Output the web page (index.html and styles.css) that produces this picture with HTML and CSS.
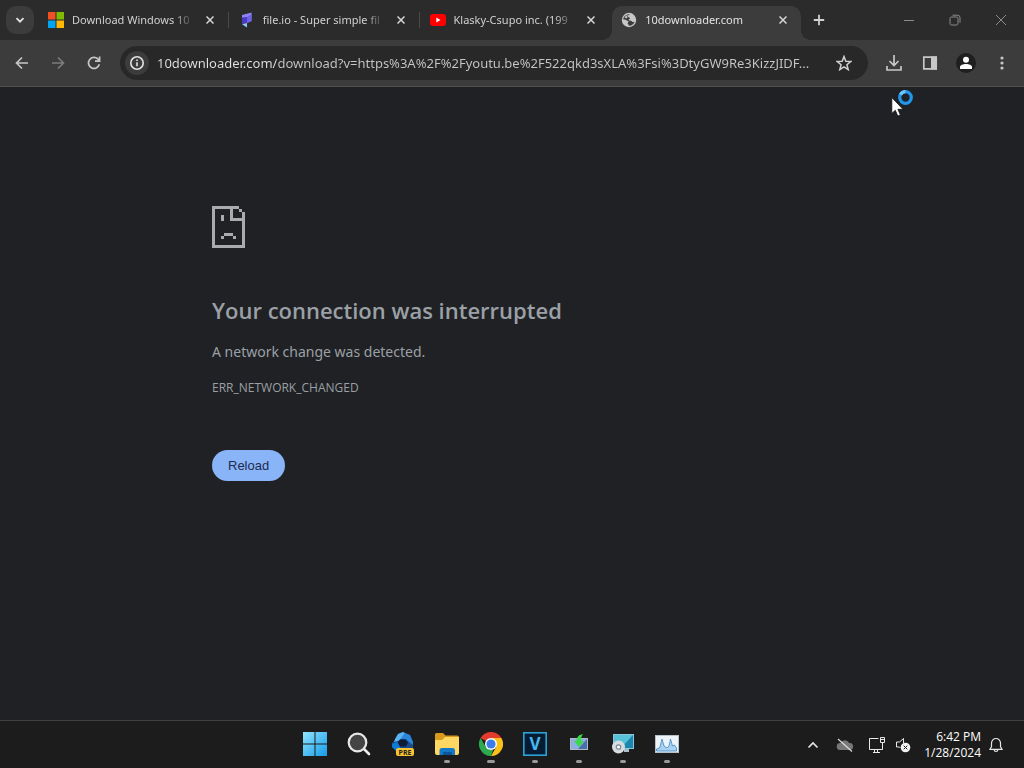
FILE: index.html
```html
<!DOCTYPE html>
<html lang="en">
<head>
    <meta charset="UTF-8">
    <meta name="viewport" content="width=device-width, initial-scale=1.0">
    <title>10downloader.com</title>
    <link rel="stylesheet" href="styles.css">
</head>
<body>
    <!-- tab strip -->
    <header class="tabstrip">
        <button class="tabSearch" aria-label="Search tabs">
            <svg width="10" height="10" viewBox="0 0 10 10"><path d="M1.5 3.2 5 6.700l3.500-3.500" fill="none" stroke="#e3e3e3" stroke-width="1.8"/></svg>
        </button>
        <nav class="tabs">
            <div class="tab">
                <svg class="favicon" viewBox="0 0 16 16">
                    <path fill="#f25022" d="M0 0h7.500v7.500H0z"/><path fill="#7fba00" d="M8.500 0H16v7.500H8.500z"/>
                    <path fill="#00a4ef" d="M0 8.500h7.500V16H0z"/><path fill="#ffb900" d="M8.500 8.500H16V16H8.500z"/>
                </svg>
                <a href="#" class="tab__title">Download Windows 10</a>
                <button class="tab__close" aria-label="Close tab"><svg width="8" height="8" viewBox="0 0 8 8"><path d="m.5.5 7 7m0-7-7 7"/></svg></button>
            </div>
            <div class="tab">
                <svg class="favicon" viewBox="0 0 16 16">
                    <path fill="#8f82f5" d="M3 3 12.500.5V9L8 11V6L3 7z"/>
                    <path fill="#4a3bc0" d="M3 5.500 8 5v6l-5 1z"/>
                    <path fill="#6f62ea" d="m8 5 4.500-3v7L8 11z"/>
                    <path fill="#8fc8f7" d="m3 12.300 5-1.300v4.500z"/>
                </svg>
                <a href="#" class="tab__title">file.io - Super simple fil</a>
                <button class="tab__close" aria-label="Close tab"><svg width="8" height="8" viewBox="0 0 8 8"><path d="m.5.5 7 7m0-7-7 7"/></svg></button>
            </div>
            <div class="tab">
                <svg class="favicon" viewBox="0 0 16 16">
                    <rect y="2" width="16" height="12" rx="3" fill="#f00"/><path fill="#fff" d="m6.300 5.500 4.200 2.500-4.200 2.500z"/>
                </svg>
                <a href="#" class="tab__title">Klasky-Csupo inc. (199</a>
                <button class="tab__close" aria-label="Close tab"><svg width="8" height="8" viewBox="0 0 8 8"><path d="m.5.5 7 7m0-7-7 7"/></svg></button>
            </div>
            <div class="tab tab--active">
                <svg class="favicon" viewBox="0 0 16 16">
                    <circle cx="8" cy="8" r="7.200" fill="#c7c7c7"/>
                    <path fill="#3c3c3c" d="M9 2.300C7.500 3 6.500 4 7.200 5c.6.700 1.700.300 1.800 1.200 0 .8-1.200.7-1.300 1.600-.1.800 1 .9 2 .9 1.300.1 1.400 1.300 2.500 1.400.6 0 1.200-.3 1.500-.7-.7 2.700-3.300 4.500-6.200 4.200.1-1.100-.2-1.500-1-2 .1-1 1.100-1.100 1-2-.2-1.100-1.700-.8-2.500-1.600-.7-.7-1.700-.6-2.700-.6C2.600 4.500 5.300 2 9 2.300z"/>
                    <path fill="#c7c7c7" d="M3.500 5.500c1-1.500 2.300-2.300 4-2.500C6 4 6 5 6.500 5.800 5.500 6.700 4.500 6 3.500 5.500z"/>
                </svg>
                <a href="#" class="tab__title">10downloader.com</a>
                <button class="tab__close" aria-label="Close tab"><svg width="8" height="8" viewBox="0 0 8 8"><path d="m.5.5 7 7m0-7-7 7"/></svg></button>
            </div>
        </nav>
        <button class="newTab" aria-label="New tab">
            <svg width="12" height="12" viewBox="0 0 12 12"><path d="M6 .8v10.400M.8 6h10.400" stroke="#d0d0d0" stroke-width="1.800"/></svg>
        </button>
        <div class="winControls">
            <button aria-label="Minimize"><svg width="12" height="12" viewBox="0 0 12 12"><path d="M1 6.500h10"/></svg></button>
            <button aria-label="Restore"><svg width="12" height="12" viewBox="0 0 12 12"><rect x="1" y="3" width="8" height="8" rx="1.500"/><path d="M3.500 1.200h5a2.500 2.500 0 0 1 2.500 2.500v5"/></svg></button>
            <button aria-label="Close"><svg width="12" height="12" viewBox="0 0 12 12"><path d="m1 1 10 10M11 1 1 11"/></svg></button>
        </div>
    </header>

    <!-- toolbar -->
    <section class="toolbar">
        <button class="tool" aria-label="Back"><svg width="16" height="16" viewBox="0 0 16 16"><path d="M14 8H3M8 2.500 2.500 8 8 13.500"/></svg></button>
        <button class="tool" aria-label="Forward" disabled><svg width="16" height="16" viewBox="0 0 16 16"><path d="M2 8h11M8 2.500 13.500 8 8 13.500"/></svg></button>
        <button class="tool" aria-label="Reload page"><svg width="16" height="16" viewBox="0 0 16 16"><path d="M13.300 9.300A5.500 5.500 0 1 1 12 4.200l1.300 1.300M13.600 1.500v4.700H9"/></svg></button>
        <form class="omnibox">
            <button type="button" class="siteInfo" aria-label="Site information">
                <svg width="16" height="16" viewBox="0 0 16 16" fill="none" stroke="#e3e3e3" stroke-width="1.600"><circle cx="8" cy="8" r="6.200"/><path d="M8 7.200v4M8 4.500v1.600"/></svg>
            </button>
            <input type="text" class="url" aria-label="Address" value="10downloader.com/download?v=https%3A%2F%2Fyoutu.be%2F522qkd3sXLA%3Fsi%3DtyGW9Re3KizzJIDF...">
            <button type="button" class="star" aria-label="Bookmark this page">
                <svg width="16" height="16" viewBox="0 0 16 16"><path d="m8 1.500 1.800 4.700 5 .3-3.900 3.200 1.300 4.900L8 11.900l-4.200 2.700 1.300-4.900-3.900-3.200 5-.3z" fill="none" stroke="#d0d0d0" stroke-width="1.500"/></svg>
            </button>
        </form>
        <button class="tool tool--downloads" aria-label="Downloads"><svg width="18" height="18" viewBox="0 0 18 18"><path d="M9 1v10M4.500 7 9 11.500 13.500 7M2 12v4h14v-4"/></svg></button>
        <button class="tool" aria-label="Side panel"><svg width="16" height="16" viewBox="0 0 16 16"><path fill="#c7c7c7" stroke="none" d="M9 1.500h6v13H9z"/><path d="M1.800 2.200h12.400v11.600H1.800z"/></svg></button>
        <button class="tool" aria-label="Profile"><svg width="20" height="20" viewBox="0 0 20 20"><g stroke="none"><circle cx="10" cy="10" r="10" fill="#1f1f1f"/><circle cx="10" cy="6.800" r="3" fill="#fff"/><path fill="#fff" d="M4 16v-2c0-2 3-3 6-3s6 1 6 3v2z"/></g></svg></button>
        <button class="tool" aria-label="Menu"><svg width="16" height="16" viewBox="0 0 16 16"><g stroke="none" fill="#c7c7c7"><circle cx="8" cy="3" r="1.600"/><circle cx="8" cy="8" r="1.600"/><circle cx="8" cy="13" r="1.600"/></g></svg></button>
    </section>

    <!-- error page -->
    <main class="page">
        <section class="error">
            <svg class="error__icon" width="33" height="42" viewBox="0 0 11 14" shape-rendering="crispEdges" fill="#a9abae">
                <path d="M0 0h9v1H7v3h3v1H6V1H1v12h9V5h1v9H0zM9 1h1v1H9zM10 2h1v3h-1z"/>
                <path d="M3 3h1v2H3zM4 9h3v1H4zM3 10h1v1H3zM7 10h1v1H7z"/>
            </svg>
            <h1 class="error__title">Your connection was interrupted</h1>
            <p class="error__text">A network change was detected.</p>
            <p class="error__code">ERR_NETWORK_CHANGED</p>
            <button class="reload">Reload</button>
        </section>
    </main>

    <!-- taskbar -->
    <footer class="taskbar">
        <nav class="apps">
            <button class="app" aria-label="Start">
                <svg width="24" height="24" viewBox="0 0 24 24">
                    <defs><linearGradient id="win" x1="0" y1="0" x2="24" y2="24" gradientUnits="userSpaceOnUse"><stop offset="0" stop-color="#8fe4ff"/><stop offset="1" stop-color="#169be8"/></linearGradient></defs>
                    <path fill="url(#win)" d="M0 0h11.500v11.500H0zM12.500 0H24v11.500H12.500zM0 12.500h11.500V24H0zM12.500 12.500H24V24H12.500z"/>
                </svg>
            </button>
            <button class="app" aria-label="Search">
                <svg width="24" height="24" viewBox="0 0 24 24"><path d="m17 17 5 5" stroke="#eee" stroke-width="2.600" stroke-linecap="round"/><circle cx="10.500" cy="10.500" r="8.800" fill="#444" stroke="#e8e8e8" stroke-width="2.200"/></svg>
            </button>
            <button class="app" aria-label="Copilot preview">
                <svg width="24" height="26" viewBox="0 0 24 26">
                    <path fill="#1a4a8e" d="M7 3 12 1l7 3 3 7v8H5l-4-3v-4l3-3z"/>
                    <path fill="#59b4f5" d="m7 3 5-2 2 1-4 6-3 2-4 1 1-3z"/>
                    <path fill="#2a86d8" d="m14 2 5 2 3 7v3l-4-3-3-3h-5z"/>
                    <path fill="#0f7ad6" d="m1 13 5-2 3 5 2 5H6l-5-5z"/>
                    <path fill="#0d1b35" d="M9 8.500h5l3 3-2 4H9l-2-4z"/>
                    <rect x="5" y="17" width="18" height="8" rx="2" fill="#f9c530"/>
                    <text x="14" y="24" class="pre">PRE</text>
                </svg>
            </button>
            <button class="app app--open" aria-label="File Explorer">
                <svg width="24" height="24" viewBox="0 0 24 24">
                    <path fill="#d99a1c" d="M0 2.500Q0 1 1.500 1H8l2.500 2.500H22Q24 3.500 24 5v8H0z"/>
                    <path fill="#ffd763" d="M0 8h7l3-3h14v16q0 2-2 2H2q-2 0-2-2z"/>
                    <path fill="#1679c8" d="M4.500 18.500Q4.500 16 7 16h10.500q2.500 0 2.500 2.500V23H4.500z"/><path fill="#0b559b" d="M8 20h9v3H8z"/>
                </svg>
            </button>
            <button class="app app--open app--current" aria-label="Google Chrome">
                <svg width="24" height="24" viewBox="0 0 24 24">
                    <path fill="#e33b2e" d="M12 12 1.600 6A12 12 0 0 1 22.400 6z"/>
                    <path fill="#fbc116" d="M12 12V6h10.400A12 12 0 0 1 12 24l5.200-9z"/>
                    <path fill="#2da94f" d="M1.600 6 6.800 15l5.200 3 2.200-.4L12 24A12 12 0 0 1 1.600 6z"/>
                    <circle cx="12" cy="12" r="6" fill="#fff"/><circle cx="12" cy="12" r="4.600" fill="#3a7de8"/>
                </svg>
            </button>
            <button class="app app--open" aria-label="Vegas">
                <svg width="24" height="24" viewBox="0 0 24 24">
                    <rect x=".8" y=".8" width="22.400" height="22.400" fill="#071c33" stroke="#2ba3d9" stroke-width="1.600"/>
                    <text x="12" y="18" class="vee">V</text>
                </svg>
            </button>
            <button class="app app--open" aria-label="Installer">
                <svg width="24" height="24" viewBox="0 0 24 24">
                    <rect x="3.500" y="6.500" width="17" height="11" fill="#496fac" stroke="#aeb7c2"/><path fill="#8cafe0" d="M4 7h16l-9 10H4z"/>
                    <path fill="#37d84a" d="M16 2C11 3 9.500 6 9.500 9H7l5 6 5-6h-3c0-3 .5-5 2-7z"/>
                </svg>
            </button>
            <button class="app app--open" aria-label="Disc tool">
                <svg width="24" height="24" viewBox="0 0 24 24">
                    <rect x="2.500" y="2.500" width="20" height="14" fill="#1d86ad" stroke="#8cc5da"/><path fill="#55c2da" d="M3 3h19L10 16H3z"/>
                    <path fill="#a9bfcb" d="M13 17h5v3h-5z"/>
                    <circle cx="7.500" cy="15" r="6.500" fill="#d7dce1"/><circle cx="7.500" cy="15" r="2.200" fill="#fff" stroke="#7c8d9c" stroke-width="1.300"/>
                </svg>
            </button>
            <button class="app app--open" aria-label="Resource monitor">
                <svg width="24" height="24" viewBox="0 0 24 24">
                    <rect x=".5" y="3.500" width="23" height="17" fill="#eef3f7" stroke="#b8c0c8"/>
                    <path fill="#a9d2f0" stroke="#3b87c4" stroke-width=".8" d="M1.500 19v-2l3-1 1-3 1.500-6 2 7 3 2 2-2 1.500-7 2 7 2-1 2 3v3z"/>
                </svg>
            </button>
        </nav>
        <div class="tray">
            <button class="tray__btn" aria-label="Show hidden icons"><svg width="12" height="12" viewBox="0 0 12 12"><path d="m1.500 8.500 4.500-4.500 4.500 4.500" stroke-width="1.600"/></svg></button>
            <button class="tray__btn tray__btn--cloud" aria-label="OneDrive"><svg width="18" height="16" viewBox="0 0 18 16"><path d="M4 13a3.500 3.500 0 0 1 .5-7 4.800 4.800 0 0 1 8.700 0A3.500 3.500 0 0 1 14 13z" fill="#777" stroke="none"/><path d="m2 2 14 12.500" stroke="#ddd" stroke-width="1.200"/></svg></button>
            <button class="tray__btn" aria-label="Network"><svg width="18" height="18" viewBox="0 0 18 18"><path d="M10.500 2.500H1.500v11h13V9M5 16.500h7M6.500 13.500v3M9.500 13.500v3M12.500 1.500h4v5h-4zM12.500 3.500h4M14.500 6.500V9"/></svg></button>
            <button class="tray__btn" aria-label="Volume"><svg width="16" height="16" viewBox="0 0 16 16"><path d="M8.500 6V1.500L4.500 5h-3v5h3l1 1"/><circle cx="10.500" cy="10.500" r="4.800" fill="#f2f2f2" stroke="none"/><path d="m8.700 8.700 3.600 3.600m0-3.600-3.600 3.600" stroke="#1c1c1c"/></svg></button>
            <time class="clock" datetime="2024-01-28T18:42">6:42 PM<br>1/28/2024</time>
            <button class="tray__btn tray__btn--bell" aria-label="Notifications"><svg width="16" height="16" viewBox="0 0 16 16"><path d="M8 1.500A4.500 4.500 0 0 0 3.500 6v3.500L2 12.300h12L12.500 9.500V6A4.500 4.500 0 0 0 8 1.500zM6 12.500q.3 2 2 2t2-2" stroke-width="1.200"/></svg></button>
        </div>
    </footer>

    <!-- busy pointer -->
    <svg class="pointer" width="24" height="30" viewBox="0 0 24 30">
        <circle cx="14.500" cy="8.500" r="5.800" fill="none" stroke="#2196ee" stroke-width="3.200"/><path d="M9.500 5.600a5.800 5.800 0 0 1 5-2.900" fill="none" stroke="#6cc4ff" stroke-width="3.200"/>
        <path d="M.8 8.500v16l3.500-3.200 2.500 5.800 2.600-1.100-2.500-5.700H12z" fill="#fff" stroke="#111" stroke-width=".8"/>
    </svg>
</body>
</html>
```
FILE: styles.css
```css
* {box-sizing: border-box;}
body {
    margin: 0; min-height: 100vh; display: flex; flex-direction: column;
    background-color: #202124; color: #e3e3e3; font-family: "Open Sans", "Noto Sans", sans-serif; font-size: 12px;
}
button {
    display: flex; align-items: center; justify-content: center; flex: none;
    margin: 0; padding: 0; border: none; background: none; color: inherit; font-family: inherit;
}
a {color: inherit; text-decoration: none;}
svg {display: block; flex: none;}

/* tab strip */
.tabstrip {display: flex; height: 40px; padding-left: 6px; background-color: #2b2b2b;}
.tabSearch {width: 28px; height: 28px; margin: 6px 4px 0 0; border-radius: 10px; background-color: #3c3c3c;}
.tabs {display: flex; flex: 0 1 765px; min-width: 0;}
.tab {
    position: relative; flex: 1 1 0; min-width: 0; display: flex; align-items: center; gap: 8px;
    padding: 0 11px 0 10px;
}
.tab:nth-child(-n+2)::after {
    content: ""; position: absolute; right: 0; top: 12px; width: 1px; height: 16px; background-color: #4a4a4a;
}
.favicon {width: 16px; height: 16px;}
.tab__title {
    flex: 1; min-width: 0; overflow: hidden; white-space: nowrap; color: #d0d0d0;
    font-family: "Noto Sans", sans-serif; font-size: 11px; line-height: 18px;
    -webkit-mask-image: linear-gradient(to left, transparent, #000 20px); mask-image: linear-gradient(to left, transparent, #000 20px);
}
.tab__close {width: 16px; height: 16px;}
.tab__close path {stroke: #d6d6d6; stroke-width: 1.5;}
.tab--active {margin: 6px 2px 0; padding: 0 10px 6px 9px; border-radius: 10px 10px 0 0; background-color: #3c3c3c;}
.tab--active .tab__title {color: #e3e3e3;}
.tab--active::before, .tab--active::after {
    content: ""; position: absolute; bottom: 0; width: 10px; height: 10px;
}
.tab--active::before {left: -10px; background: radial-gradient(circle at 0 0, transparent 10px, #3c3c3c 10px);}
.tab.tab--active::after {right: -10px; background: radial-gradient(circle at 100% 0, transparent 10px, #3c3c3c 10px);}
.newTab {width: 28px; margin-left: 2px;}
.winControls {display: flex; margin-left: auto;}
.winControls button {width: 46px;}
.winControls svg {fill: none; stroke: #8c8c8c;}

/* toolbar */
.toolbar {
    display: flex; align-items: center; gap: 8px; height: 47px; padding: 0 8px;
    background-color: #3c3c3c; border-bottom: 1px solid #505050;
}
.tool {width: 28px; height: 28px;}
.tool svg {fill: none; stroke: #c7c7c7; stroke-width: 1.7;}
.tool:disabled svg {stroke: #7c7c7c;}
.tool--downloads {margin-left: 4px;}
.omnibox {
    flex: 1; min-width: 0; display: flex; align-items: center; height: 34px; margin-left: 4px; padding: 0 16px 0 5px;
    border-radius: 17px; background-color: #282828;
}
.siteInfo {width: 24px; height: 24px; border-radius: 50%; background-color: #3c3c3c;}
.url {
    flex: 1; min-width: 0; margin: 0 2px 0 8px; padding: 0; border: none; outline: none;
    font: 13px/20px "Noto Sans", sans-serif;
    background: linear-gradient(to right, #e3e3e3 119px, #c7c7c7 119px) text; color: transparent;
}

/* error page */
.page {flex: 1; padding: 119px 24px 24px;}
.error {max-width: 600px; margin: 0 auto; color: #9aa0a6;}
.error__title {margin: 46px 0 0; font-size: 22px; font-weight: 600; line-height: 32px;}
.error__text {margin: 14px 0 0; font-family: "Noto Sans", sans-serif; font-size: 14px; line-height: 24px;}
.error__code {margin: 14px 0 0; font-size: 12px; line-height: 20px;}
.reload {
    margin-top: 52px; padding: 0 16px; height: 31px; border-radius: 16px;
    background-color: #8ab4f8; color: #1d2b4d; font-family: "Liberation Sans", Arial, sans-serif; font-size: 13px;
}

/* taskbar */
.taskbar {
    display: grid; grid-template-columns: 1fr auto 1fr; height: 48px; background-color: #1c1c1c; border-top: 1px solid #414141;
}
.apps {grid-column: 2; display: flex; margin-right: 42px;}
.app {position: relative; width: 44px; height: 46px;}
.app--open::after {
    content: ""; position: absolute; bottom: 4px; left: 19px; width: 6px; height: 3px; border-radius: 2px; background-color: #9a9a9a;
}
.app--current::after {left: 18px; width: 8px;}
.pre {font: 700 7px "Open Sans", sans-serif; text-anchor: middle; fill: #222;}
.vee {font: 700 17px "Open Sans", sans-serif; text-anchor: middle; fill: #45b8ee;}
.tray {display: flex; align-items: center; justify-content: flex-end; padding-right: 18px;}
.tray__btn {width: 26px; height: 32px;}
.tray__btn svg {fill: none; stroke: #e8e8e8;}
.tray__btn--cloud {width: 38px;}
.clock {margin: 0 5px 0 8px; text-align: right; font-size: 12px; line-height: 16px; color: #fff;}
.tray__btn--bell {width: 20px;}

.pointer {position: absolute; left: 891px; top: 89px;}
```
